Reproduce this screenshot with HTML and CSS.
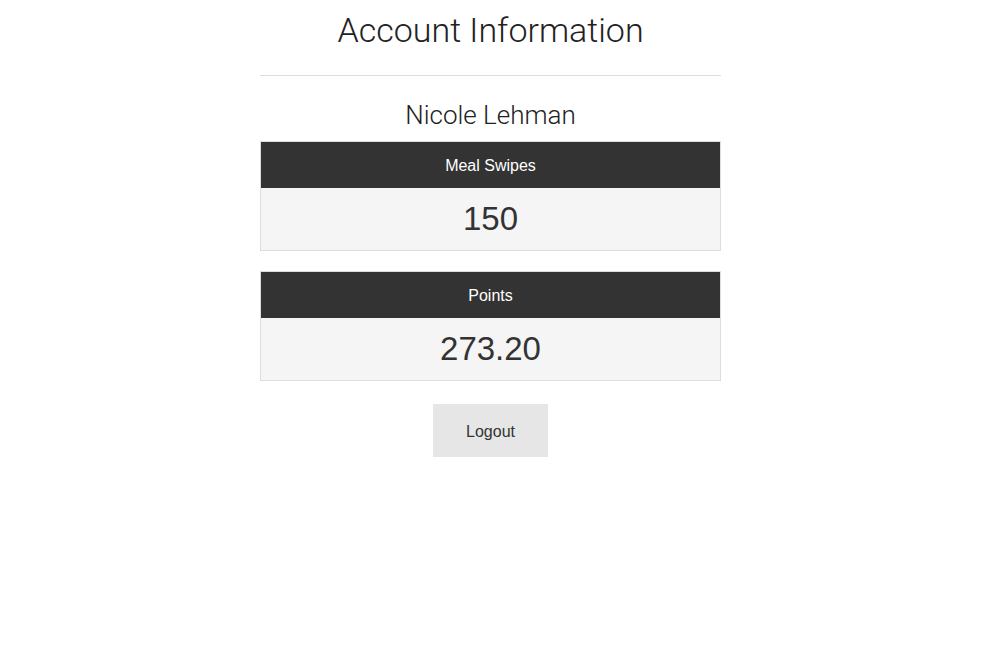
FILE: index.html
```html
<!DOCTYPE html>
<html>
<head>
<meta charset="utf-8">
<title>Account Information</title>
<link rel="stylesheet" href="styles.css">
</head>
<body>
<div class="container">
  <h1 class="title">Account Information</h1>
  <hr class="divider">
  <h2 class="name">Nicole Lehman</h2>
  <div class="card">
    <div class="card-head">Meal Swipes</div>
    <div class="card-body">150</div>
  </div>
  <div class="card">
    <div class="card-head">Points</div>
    <div class="card-body">273.20</div>
  </div>
  <div class="actions">
    <button class="logout">Logout</button>
  </div>
</div>
</body>
</html>
```

FILE: styles.css
```css
html, body {
  margin: 0;
  padding: 0;
  background: #fff;
}
body {
  font-family: "Liberation Sans", Arial, sans-serif;
  color: #333;
}
.container {
  width: 461px;
  margin: 0 auto;
  display: flex;
  flex-direction: column;
}
.title {
  font-family: Roboto, "Liberation Sans", sans-serif;
  font-weight: 300;
  font-size: 34px;
  line-height: 40px;
  margin: 10px 0 0;
  text-align: center;
  color: #222;
}
.divider {
  border: 0;
  border-top: 1px solid #ddd;
  margin: 25px 0 0;
  height: 0;
}
.name {
  font-family: Roboto, "Liberation Sans", sans-serif;
  font-weight: 300;
  font-size: 26px;
  line-height: 30px;
  margin: 24px 0 0;
  text-align: center;
  color: #222;
}
.card {
  border: 1px solid #ddd;
  margin-top: 11px;
}
.card + .card {
  margin-top: 20px;
}
.card-head {
  background: #333;
  color: #fff;
  height: 45px;
  padding-top: 1px;
  display: flex;
  align-items: center;
  justify-content: center;
  font-size: 16px;
}
.card-body {
  background: #f5f5f5;
  height: 62px;
  display: flex;
  align-items: center;
  justify-content: center;
  font-size: 33px;
  color: #333;
}
.actions {
  display: flex;
  justify-content: center;
  margin-top: 23px;
}
.logout {
  width: 115px;
  height: 53px;
  border: 0;
  background: #e6e6e6;
  color: #333;
  font-family: "Liberation Sans", Arial, sans-serif;
  font-size: 16px;
  padding: 2px 0 0;
}
```
